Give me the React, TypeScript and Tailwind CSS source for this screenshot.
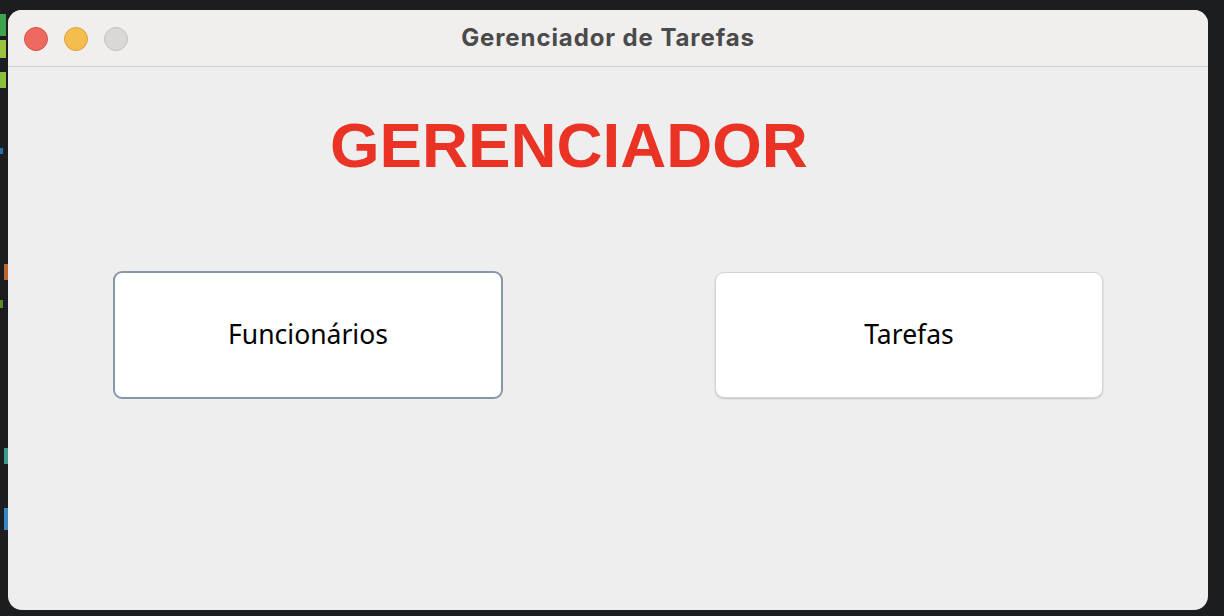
import React from 'react';

function Dot({ color, border }: { color: string; border: string }) {
  return <div className={`w-6 h-6 rounded-full border ${color} ${border}`} />;
}

export default function App() {
  return (
    <div className="w-[1224px] h-[616px] bg-[#1c1d20] flex overflow-hidden">
      {/* editor text peeking out behind the window */}
      <div className="w-[8px] shrink-0 flex flex-col pt-[14px] gap-0">
        <div className="h-[22px] w-[6px] bg-[#3fa34d] mb-[4px]" />
        <div className="h-[18px] w-[6px] bg-[#9ac43f] mb-[14px]" />
        <div className="h-[16px] w-[6px] bg-[#8dbf3c] mb-[60px]" />
        <div className="h-[6px] w-[3px] bg-[#2c6fa3] mb-[110px]" />
        <div className="h-[16px] w-[4px] bg-[#b8692f] mb-[20px] ml-[4px]" />
        <div className="h-[8px] w-[3px] bg-[#5f8a2a] mb-[140px]" />
        <div className="h-[16px] w-[4px] bg-[#3a9b8e] mb-[44px] ml-[4px]" />
        <div className="h-[22px] w-[4px] bg-[#3c86c0] ml-[4px]" />
      </div>
      <div className="pt-[10px]">
        <div className="w-[1200px] h-[600px] rounded-[14px] overflow-hidden bg-[#eeeeee] flex flex-col">
          <div className="h-[57px] shrink-0 bg-[#f0efed] border-b border-[#d2d2d2] relative flex items-center">
            <div className="flex items-center gap-4 pl-4 pt-[1px]">
              <Dot color="bg-[#ee6a5f]" border="border-[#d65248]" />
              <Dot color="bg-[#f5bd4f]" border="border-[#d9a23a]" />
              <Dot color="bg-[#d9d8d6]" border="border-[#c3c2c0]" />
            </div>
            <div className="absolute inset-0 flex items-center justify-center">
              <span className="font-['Inter',sans-serif] font-bold text-[24px] text-[#4a4a4a] tracking-[0.9px]">
                Gerenciador de Tarefas
              </span>
            </div>
          </div>
          <div className="flex-1 flex flex-col">
            <div className="pl-[322px] mt-[46px]">
              <h1 className="font-['Liberation_Sans',Arial,sans-serif] font-bold text-[63.7px] leading-none text-[#ea3324]">
                GERENCIADOR
              </h1>
            </div>
            <div className="flex justify-between px-[105px] mt-[94px]">
              <button className="w-[390px] h-[128px] bg-white rounded-[9px] border-2 border-[#8896aa] font-['Noto_Sans',sans-serif] text-[26.5px] text-black">
                Funcionários
              </button>
              <button className="w-[388px] h-[126px] mt-[1px] bg-white rounded-[9px] border border-[#d4d4d4] shadow-[0_1px_2px_rgba(0,0,0,0.18)] font-['Noto_Sans',sans-serif] text-[26.5px] text-black">
                Tarefas
              </button>
            </div>
          </div>
        </div>
      </div>
    </div>
  );
}
